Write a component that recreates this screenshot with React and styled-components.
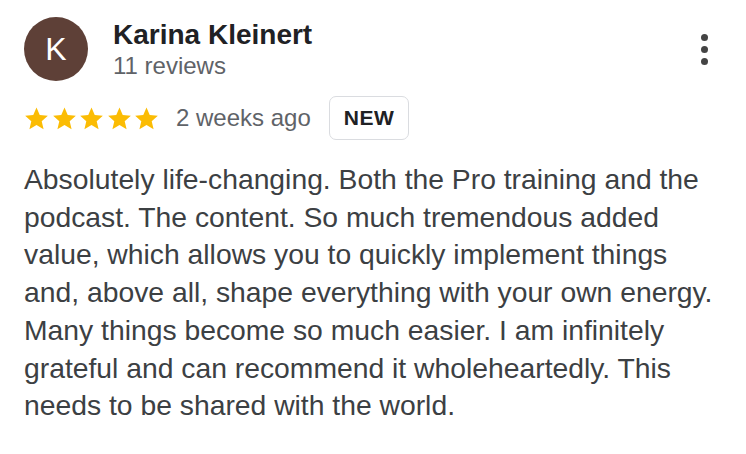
import React from 'react'
import styled, { createGlobalStyle } from 'styled-components'

const GlobalStyle = createGlobalStyle`
    html, body {
        margin: 0;
        padding: 0;
        background: #ffffff;
    }
    body {
        font-family: "Liberation Sans", Arial, sans-serif;
    }
`;

const Card = styled.div`
    width: 746px;
    height: 454px;
    box-sizing: border-box;
    padding: 17px 24px 0 24px;
    background: #fff;
`;

const Header = styled.div`
    display: flex;
    align-items: flex-start;
`;

const Avatar = styled.div`
    width: 64px;
    height: 64px;
    border-radius: 50%;
    background: #5e4037;
    color: #fff;
    display: flex;
    align-items: center;
    justify-content: center;
    font-size: 32px;
    flex-shrink: 0;
`;

const Who = styled.div`
    margin-left: 25px;
    flex: 1;
    padding-top: 2px;
`;

const Name = styled.div`
    font-size: 28px;
    font-weight: 700;
    color: #202124;
    line-height: 31px;
`;

const Sub = styled.div`
    font-size: 24px;
    color: #5f6368;
    line-height: 30px;
    margin-top: 1px;
`;

const Kebab = styled.button`
    border: none;
    background: none;
    padding: 0;
    margin: 17px 14px 0 0;
    display: flex;
    flex-direction: column;
    gap: 5px;
    span {
        width: 7px;
        height: 7px;
        border-radius: 50%;
        background: #444;
    }
`;

const Meta = styled.div`
    display: flex;
    align-items: center;
    margin-top: 15px;
`;

const Stars = styled.div`
    display: flex;
    gap: 2.5px;
    svg {
        width: 25px;
        height: 25px;
    }
`;

const Ago = styled.span`
    margin-left: 17px;
    font-size: 24px;
    color: #5f6368;
`;

const Badge = styled.span`
    margin-left: 18px;
    border: 1.5px solid #dadce0;
    border-radius: 7px;
    padding: 9px 14px;
    font-size: 21px;
    font-weight: 700;
    color: #202124;
    letter-spacing: 0.5px;
`;

const Body = styled.p`
    margin: 21px 0 0;
    font-size: 28.3px;
    line-height: 37.7px;
    color: #3c4043;
    max-width: 690px;
`;

const Star = () => (
    <svg viewBox="0 0 24 24">
        <path fill="#fbbc04" d="M12 1.5l3.1 7.2 7.8.7-5.9 5.2 1.8 7.7L12 18.2l-6.8 4.1 1.8-7.7-5.9-5.2 7.8-.7z"/>
    </svg>
);

const text = "Absolutely life-changing. Both the Pro training and the podcast. The content. So much tremendous added value, which allows you to quickly implement things and, above all, shape everything with your own energy. Many things become so much easier. I am infinitely grateful and can recommend it wholeheartedly. This needs to be shared with the world.";

const App = () => (
    <>
        <GlobalStyle/>
        <Card>
            <Header>
                <Avatar>K</Avatar>
                <Who>
                    <Name>Karina Kleinert</Name>
                    <Sub>11 reviews</Sub>
                </Who>
                <Kebab aria-label="More options">
                    <span/><span/><span/>
                </Kebab>
            </Header>
            <Meta>
                <Stars>
                    {[0, 1, 2, 3, 4].map(i => <Star key={i}/>)}
                </Stars>
                <Ago>2 weeks ago</Ago>
                <Badge>NEW</Badge>
            </Meta>
            <Body>{text}</Body>
        </Card>
    </>
);

export default App;
